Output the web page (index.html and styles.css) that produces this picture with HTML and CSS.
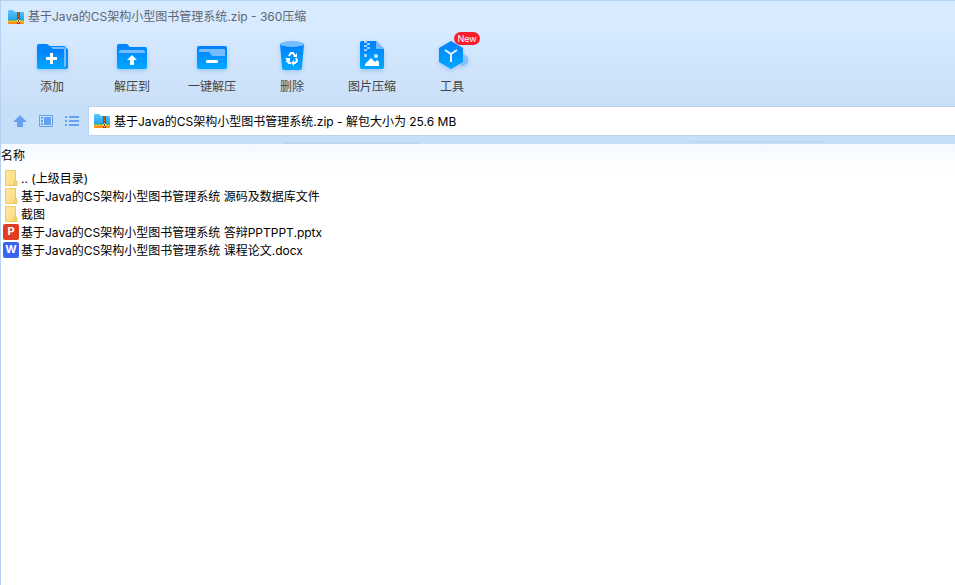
FILE: index.html
```html
<!DOCTYPE html>
<html lang="zh-CN">
<head>
    <meta charset="UTF-8">
    <title>基于Java的CS架构小型图书管理系统.zip - 360压缩</title>
    <link rel="stylesheet" href="styles.css">
</head>
<body>
    <!-- shared icons -->
    <svg class="defs" width="0" height="0">
        <defs>
            <linearGradient id="blue" x1="0" y1="0" x2="0" y2="1">
                <stop offset="0" stop-color="#0080ff"/>
                <stop offset="1" stop-color="#00a8ff"/>
            </linearGradient>
            <linearGradient id="sky" x1="0" y1="0" x2="0" y2="1">
                <stop offset="0" stop-color="#5cc8fa"/>
                <stop offset="1" stop-color="#1f9fee"/>
            </linearGradient>
            <linearGradient id="paper" x1="0" y1="0" x2="1" y2="1">
                <stop offset="0" stop-color="#ffe9a2"/>
                <stop offset="1" stop-color="#fadb7c"/>
            </linearGradient>
            <symbol id="archive" viewBox="0 0 16 14">
                <path d="M0 1q0-1 1-1h4l2 2h8q1 0 1 1v8H0z" fill="url(#sky)"/>
                <path d="M0 10h16v1H0z" fill="#6cc04a"/>
                <path d="M0 11h16v2q0 1-1 1H1q-1 0-1-1z" fill="#ff8a1c"/>
                <path d="M0 11h16v1H0z" fill="#ffb52e"/>
                <path d="M9 2h3v12H9z" fill="#9a4a12"/>
                <path d="M10 2h1v1h-1zM10 4h1v1h-1zM10 6h1v1h-1z" fill="#c87a38"/>
                <path d="M10 9h1v4h-1zM9 10h3v2H9z" fill="#ffe08a"/>
                <path d="M10 10h1v2h-1z" fill="#7a3a10"/>
            </symbol>
            <symbol id="folder" viewBox="0 0 16 16">
                <path d="M2 0h11v10l1 1v5H2z" fill="url(#paper)"/>
                <path d="M2.500 .5h10v10l1.500 1v4h-11.500z" fill="none" stroke="#ecca68"/>
                <path d="M11.500 15.500v-4l1.500-1" fill="none" stroke="#e3bd55"/>
            </symbol>
        </defs>
    </svg>

    <div class="window">
        <header class="titlebar">
            <svg class="archive-icon" width="16" height="14"><use href="#archive"/></svg>
            <h1>基于Java的CS架构小型图书管理系统.zip - 360压缩</h1>
        </header>

        <div class="toolbar">
            <button type="button" class="tool">
                <svg width="34" height="32" viewBox="0 0 34 32">
                    <path d="M8 5h22q3 0 3 2v17q0 2-2 2H8z" fill="#0a8cf5"/>
                    <path d="M2 3q0-2 2-2h8l3 2h14q2 0 2 2v19q0 2-2 2H4q-2 0-2-2z" fill="url(#blue)"/>
                    <path d="M16 4h13q2 0 2 2v17q0 1-2 1V6H18z" fill="#75bdff"/>
                    <path d="M2 6h27v18q0 2-2 2H4q-2 0-2-2z" fill="url(#blue)"/>
                    <path d="M15 10h3v4h4v3h-4v4h-3v-4h-4v-3h4z" fill="#fff"/>
                </svg>
                <span>添加</span>
            </button>
            <button type="button" class="tool">
                <svg width="34" height="32" viewBox="0 0 34 32">
                    <path d="M2 3q0-2 2-2h8l3 3h15q2 0 2 2v18q0 2-2 2H4q-2 0-2-2z" fill="url(#blue)"/>
                    <path d="M4 9q0-2 2-2h22q2 0 2 2v1H4z" fill="#75bdff"/>
                    <path d="M17 12l5 5h-3v5h-4v-5h-3z" fill="#fff"/>
                </svg>
                <span>解压到</span>
            </button>
            <button type="button" class="tool">
                <svg width="34" height="32" viewBox="0 0 34 32">
                    <rect x="2" y="3" width="30" height="23" rx="2" fill="url(#blue)"/>
                    <path d="M4 7q0-1 1-1h24q1 0 1 1v6H17l-3-4H4z" fill="#75bdff"/>
                    <rect x="11" y="17" width="12" height="3" rx="1" fill="#fff"/>
                </svg>
                <span>一键解压</span>
            </button>
            <button type="button" class="tool">
                <svg width="34" height="32" viewBox="0 0 34 32">
                    <path d="M5 1h24l-2 23q0 3-3 3H10q-3 0-3-3z" fill="url(#blue)"/>
                    <ellipse cx="17" cy="1" rx="12" ry="3" fill="#75bdff"/>
                    <g fill="none" stroke="#fff" stroke-width="2">
                        <path d="M14 13l2-3h2l2 3"/>
                        <path d="M21 15l1 3-2 2h-2"/>
                        <path d="M16 20h-2l-2-2 1-3"/>
                    </g>
                    <path d="M18 14h4v-4zM19 17v6l-3-3zM10 15h5v4z" fill="#fff"/>
                </svg>
                <span>删除</span>
            </button>
            <button type="button" class="tool">
                <svg width="34" height="32" viewBox="0 0 34 32">
                    <path d="M5 0q0-2 2-2h14l8 8v18q0 2-2 2H7q-2 0-2-2z" fill="url(#blue)"/>
                    <path d="M21-2l8 8h-8z" fill="#75bdff"/>
                    <path d="M9-2h3v2H9zM12 0h3v2h-3zM9 2h3v2H9zM12 4h3v2h-3zM9 6h3v2H9zM9 11h3v3H9z" fill="#9dd0ff"/>
                    <circle cx="21" cy="13" r="2" fill="#d3ebff"/>
                    <path d="M10 23v-2l6-6 4 4 2-2 2 2v4z" fill="#fff"/>
                </svg>
                <span>图片压缩</span>
            </button>
            <button type="button" class="tool">
                <svg width="34" height="32" viewBox="0 0 34 32">
                    <path d="M28 11l5 3v6l-5 3-5-3v-6z" fill="#85c1fb"/>
                    <path d="M16-2l12 7v14l-12 7-12-7V5z" fill="url(#blue)"/>
                    <path d="M10 7l6 4 6-4M16 11v8" fill="none" stroke="#e8f4ff" stroke-width="2"/>
                </svg>
                <span>工具</span>
                <em class="badge">New</em>
            </button>
        </div>

        <div class="addressbar">
            <button type="button" class="nav" aria-label="向上">
                <svg width="16" height="14" viewBox="0 0 16 14">
                    <path d="M8 1l7 7h-4v5H5V8H1z" fill="#67a0ee"/>
                </svg>
            </button>
            <button type="button" class="nav" aria-label="视图">
                <svg width="16" height="14" viewBox="0 0 16 14" fill="#67a0ee">
                    <path d="M1.500 1.500h13v11h-13z" fill="none" stroke="#67a0ee"/>
                    <path d="M3 3h2v2H3zM3 6h2v2H3zM3 9h2v2H3zM6 3h7v8H6z"/>
                </svg>
            </button>
            <button type="button" class="nav" aria-label="列表">
                <svg width="16" height="14" viewBox="0 0 16 14" fill="#67a0ee">
                    <path d="M1 2h2v2H1zM1 6h2v2H1zM1 10h2v2H1zM5 2h10v2H5zM5 6h10v2H5zM5 10h10v2H5z"/>
                </svg>
            </button>
            <div class="path">
                <svg class="archive-icon" width="16" height="14"><use href="#archive"/></svg>
                <input type="text" aria-label="路径" value="基于Java的CS架构小型图书管理系统.zip - 解包大小为 25.6 MB">
            </div>
        </div>

        <table class="files">
            <thead>
                <tr><th scope="col">名称</th></tr>
            </thead>
            <tbody>
                <tr><td><div class="file"><svg width="16" height="16"><use href="#folder"/></svg><span>.. (上级目录)</span></div></td></tr>
                <tr><td><div class="file"><svg width="16" height="16"><use href="#folder"/></svg><span>基于Java的CS架构小型图书管理系统 源码及数据库文件</span></div></td></tr>
                <tr><td><div class="file"><svg width="16" height="16"><use href="#folder"/></svg><span>截图</span></div></td></tr>
                <tr><td><div class="file"><i class="doc ppt">P</i><span>基于Java的CS架构小型图书管理系统 答辩PPTPPT.pptx</span></div></td></tr>
                <tr><td><div class="file"><i class="doc word">W</i><span>基于Java的CS架构小型图书管理系统 课程论文.docx</span></div></td></tr>
            </tbody>
        </table>
    </div>
</body>
</html>
```
FILE: styles.css
```css
* {
    box-sizing: border-box;
}
body {
    margin: 0;
    background: #fff;
    color: #000;
    font-family: Inter, "Noto Sans CJK SC", sans-serif;
    font-size: 12px;
    line-height: 18px;
}
.defs {
    position: absolute;
}
.window {
    min-height: 100vh;
    border-left: 1px solid #b4d3f3;
}
svg {
    flex: none;
    overflow: visible;
}
button {
    border: 0;
    padding: 0;
    background: none;
    color: inherit;
    font: inherit;
    cursor: pointer;
}
.titlebar {
    display: flex;
    align-items: center;
    gap: 4px;
    height: 33px;
    padding-left: 7px;
    border-top: 1px solid #b4d3f3;
    background: #d7eaff;
}
.titlebar h1 {
    margin: 0;
    color: #5f6670;
    font-size: 12px;
    font-weight: normal;
}
.toolbar {
    display: flex;
    height: 73px;
    padding: 10px 0 0 11px;
    background: linear-gradient(#d5e9ff, #cae0f8);
}
.tool {
    position: relative;
    display: flex;
    flex-direction: column;
    align-items: center;
    width: 80px;
    height: 54px;
    color: #444;
}
.tool svg {
    filter: drop-shadow(0 2px 2px rgba(60, 140, 230, 0.3));
}
.tool span {
    margin-top: 3px;
}
.badge {
    position: absolute;
    top: -11px;
    left: 42px;
    width: 26px;
    height: 13px;
    border-radius: 7px;
    background: #fa1e2d;
    color: #fff;
    font-size: 9px;
    font-style: normal;
    line-height: 13px;
    text-align: center;
}
.addressbar {
    display: flex;
    align-items: center;
    height: 38px;
    padding: 0 0 8px 6px;
    /* faint streaks under the path box */
    background:
        linear-gradient(#b9d7f5, #b9d7f5) 283px 36px / 135px 2px no-repeat,
        linear-gradient(#b9d7f5, #b9d7f5) 688px 35px / 136px 1px no-repeat,
        #c5dff9;
}
.nav {
    display: flex;
    justify-content: center;
    width: 26px;
}
.path {
    display: flex;
    flex: 1;
    align-items: center;
    gap: 4px;
    height: 30px;
    margin-left: 3px;
    padding-left: 5px;
    border: 1px solid #b9d5f2;
    border-right: 0;
    background: #fff;
}
.path input {
    flex: 1;
    min-width: 0;
    border: 0;
    padding: 2px 0 0;
    outline: none;
    background: none;
    color: #000;
    font: inherit;
}
.files {
    width: 100%;
    border-collapse: collapse;
}
.files th {
    height: 25px;
    padding: 0 0 2px;
    background: linear-gradient(#f3f9ff, #fff);
    font-weight: normal;
    text-align: left;
}
.files td {
    padding: 0;
}
.file {
    display: flex;
    align-items: center;
    gap: 2px;
    height: 18px;
    padding-left: 2px;
    white-space: pre;
}
.file span {
    padding-top: 2px;
}
.doc {
    width: 16px;
    height: 16px;
    border-radius: 2px;
    color: #fff;
    font-size: 11px;
    font-style: normal;
    font-weight: bold;
    line-height: 14px;
    text-align: center;
}
.ppt {
    background: #e03e23;
}
.word {
    background: #3a63f0;
}
```
